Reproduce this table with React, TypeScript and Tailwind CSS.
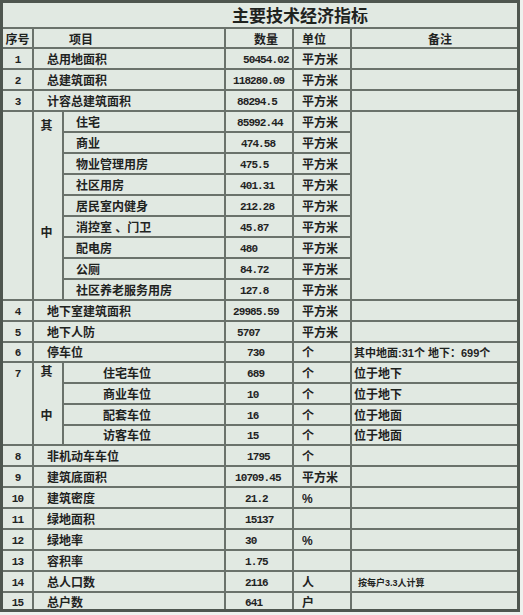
import React from 'react';
import clsx from 'clsx';

type CellProps = {
  className?: string;
  children?: React.ReactNode;
  last?: boolean;
  bottom?: boolean;
};

// one grid cell: right + bottom rule, outer edge is drawn by the frame
const Cell = ({ className, children, last, bottom }: CellProps) => (
  <div
    className={clsx(
      'flex items-center pt-[3px] border-[#6a726b] min-w-0 whitespace-nowrap',
      !last && 'border-r-2',
      !bottom && 'border-b-2',
      className
    )}
  >
    {children}
  </div>
);

const num = "font-['Liberation_Mono',monospace] text-[11px] tracking-[-0.9px] font-bold";

type Row = { no: string; name: string; qty: string; qx: string; unit: string; note?: string; small?: boolean };

const head: Row[] = [
  { no: '1', name: '总用地面积', qty: '50454.02', qx: 'pl-[17px]', unit: '平方米' },
  { no: '2', name: '总建筑面积', qty: '118280.09', qx: 'pl-[7px]', unit: '平方米' },
  { no: '3', name: '计容总建筑面积', qty: '88294.5', qx: 'pl-[11px]', unit: '平方米' },
];

const partsA = [
  { name: '住宅', qty: '85992.44', qx: 'pl-[11px]' },
  { name: '商业', qty: '474.58', qx: 'pl-[15px]' },
  { name: '物业管理用房', qty: '475.5', qx: 'pl-[14px]' },
  { name: '社区用房', qty: '401.31', qx: 'pl-[14px]' },
  { name: '居民室内健身', qty: '212.28', qx: 'pl-[14px]' },
  { name: '消控室 、门卫', qty: '45.87', qx: 'pl-[14px]' },
  { name: '配电房', qty: '480', qx: 'pl-[14px]' },
  { name: '公厕', qty: '84.72', qx: 'pl-[14px]' },
  { name: '社区养老服务用房', qty: '127.8', qx: 'pl-[14px]' },
];

const mid: Row[] = [
  { no: '4', name: '地下室建筑面积', qty: '29985.59', qx: 'pl-[7px]', unit: '平方米' },
  { no: '5', name: '地下人防', qty: '5707', qx: 'pl-[11px]', unit: '平方米' },
  { no: '6', name: '停车位', qty: '730', qx: 'pl-[21px]', unit: '个', note: '其中地面:31个 地下：699个' },
];

const partsB = [
  { name: '住宅车位', qty: '689', note: '位于地下' },
  { name: '商业车位', qty: '10', note: '位于地下' },
  { name: '配套车位', qty: '16', note: '位于地面' },
  { name: '访客车位', qty: '15', note: '位于地面' },
];

const tail: Row[] = [
  { no: '8', name: '非机动车车位', qty: '1795', qx: 'pl-[21px]', unit: '个' },
  { no: '9', name: '建筑底面积', qty: '10709.45', qx: 'pl-[9px]', unit: '平方米' },
  { no: '10', name: '建筑密度', qty: '21.2', qx: 'pl-[19px]', unit: '%' },
  { no: '11', name: '绿地面积', qty: '15137', qx: 'pl-[19px]', unit: '' },
  { no: '12', name: '绿地率', qty: '30', qx: 'pl-[19px]', unit: '%' },
  { no: '13', name: '容积率', qty: '1.75', qx: 'pl-[19px]', unit: '' },
  { no: '14', name: '总人口数', qty: '2116', qx: 'pl-[19px]', unit: '人', note: '按每户3.3人计算', small: true },
  { no: '15', name: '总户数', qty: '641', qx: 'pl-[19px]', unit: '户' },
];

const PlainRow = ({ r, bottom }: { r: Row; bottom?: boolean }) => (
  <>
    <Cell bottom={bottom} className={clsx('justify-center', num)}>{r.no}</Cell>
    <Cell bottom={bottom} className="col-span-2 pl-[13px]">{r.name}</Cell>
    <Cell bottom={bottom} className={clsx(r.qx, num)}>{r.qty}</Cell>
    <Cell bottom={bottom} className="pl-2">{r.unit}</Cell>
    <Cell bottom={bottom} last className={r.small ? 'pl-[6px] text-[9px]' : 'pl-[2px] text-[11px]'}>
      {r.note}
    </Cell>
  </>
);

export default function App() {
  return (
    <div className="min-h-screen bg-[#eef2ee]">
      <div
        className="w-[520px] grid grid-cols-[31px_30px_162px_68px_58px_1fr] grid-rows-[26px_20px_repeat(12,21px)_repeat(8,20.75px)_repeat(6,21px)_16px] border-[3px] border-[#4e564f] bg-[#e1e9e2] text-[#1f231f] text-[12px] leading-[12px] font-bold font-['Liberation_Sans','Noto_Sans_CJK_SC',sans-serif]"
      >
        <Cell last className="col-span-6 pl-[229px] text-[17px] leading-[18px] pt-[1px]">
          主要技术经济指标
        </Cell>

        <Cell className="justify-center">序号</Cell>
        <Cell className="col-span-2 pl-[35px]">项目</Cell>
        <Cell className="pl-[28px]">数量</Cell>
        <Cell className="pl-2">单位</Cell>
        <Cell last className="pl-[76px]">备注</Cell>

        {head.map((r) => (
          <PlainRow key={r.no} r={r} />
        ))}

        {partsA.map((p, i) => (
          <React.Fragment key={p.name}>
            {i === 0 && (
              <>
                <Cell className="row-span-9" />
                <Cell className="row-span-9 flex-col !items-center justify-start pt-[8px] pr-[3px]">
                  <span>其</span>
                  <span className="mt-[95px]">中</span>
                </Cell>
              </>
            )}
            <Cell className="pl-[12px]">{p.name}</Cell>
            <Cell className={clsx(p.qx, num)}>{p.qty}</Cell>
            <Cell className="pl-2">平方米</Cell>
            {i === 0 && <Cell last className="row-span-9" />}
          </React.Fragment>
        ))}

        {mid.map((r) => (
          <PlainRow key={r.no} r={r} />
        ))}

        {partsB.map((p, i) => (
          <React.Fragment key={p.name}>
            {i === 0 && (
              <>
                <Cell className={clsx('row-span-4 !items-start justify-center pt-[5px]', num)}>7</Cell>
                <Cell className="row-span-4 flex-col !items-center justify-start pt-[3px] pr-[3px]">
                  <span>其</span>
                  <span className="mt-[32px]">中</span>
                </Cell>
              </>
            )}
            <Cell className="pl-[39px]">{p.name}</Cell>
            <Cell className={clsx('pl-[21px]', num)}>{p.qty}</Cell>
            <Cell className="pl-2">个</Cell>
            <Cell last className="pl-[2px]">{p.note}</Cell>
          </React.Fragment>
        ))}

        {tail.map((r, i) => (
          <PlainRow key={r.no} r={r} bottom={i === tail.length - 1} />
        ))}
      </div>
    </div>
  );
}
